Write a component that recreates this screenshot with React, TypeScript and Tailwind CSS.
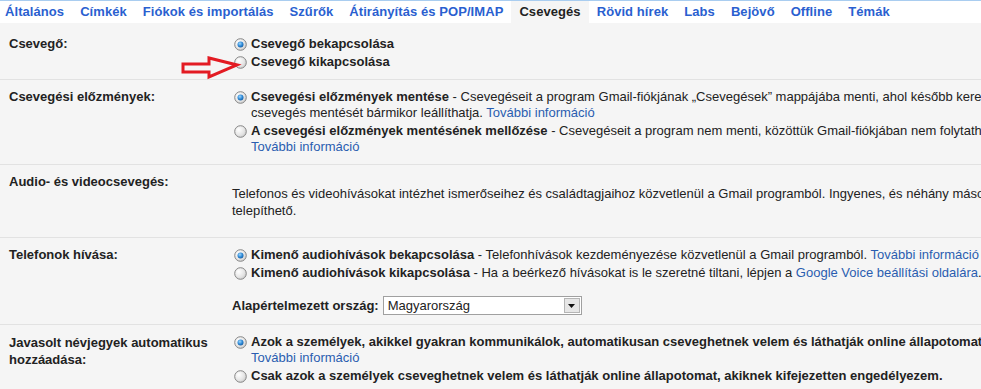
import React from "react";

function Radio({ checked }: { checked?: boolean }) {
  return (
    <svg width="13" height="13" viewBox="0 0 13 13">
      <defs>
        <radialGradient id="rb" cx="0.35" cy="0.35" r="0.8">
          <stop offset="0" stopColor="#ffffff" />
          <stop offset="0.6" stopColor="#e4e4e4" />
          <stop offset="1" stopColor="#c2c2c2" />
        </radialGradient>
        <radialGradient id="rd" cx="0.4" cy="0.35" r="0.8">
          <stop offset="0" stopColor="#9fd6fa" />
          <stop offset="0.5" stopColor="#2e8ad8" />
          <stop offset="1" stopColor="#0d4a8a" />
        </radialGradient>
      </defs>
      <circle cx="6.5" cy="6.5" r="5.8" fill="url(#rb)" stroke="#858585" strokeWidth="1" />
      {checked && <circle cx="6.5" cy="6.5" r="3" fill="url(#rd)" />}
    </svg>
  );
}

function Option({ checked, children, last }: { checked?: boolean; children: React.ReactNode; last?: boolean }) {
  return (
    <div className={`flex ${last ? "" : "mb-[2px]"}`}>
      <div className="w-[18px] shrink-0 pl-[1px] pt-[2px]">
        <Radio checked={checked} />
      </div>
      <div className="leading-[16px]">{children}</div>
    </div>
  );
}

const Link = ({ children }: { children: React.ReactNode }) => (
  <span className="text-[#2a5db0]">{children}</span>
);

const tabs = [
  "Általános",
  "Címkék",
  "Fiókok és importálás",
  "Szűrők",
  "Átirányítás és POP/IMAP",
  "Csevegés",
  "Rövid hírek",
  "Labs",
  "Bejövő",
  "Offline",
  "Témák",
];

export default function App() {
  return (
    <div className="relative w-[981px] h-[389px] overflow-hidden bg-[#f5f5f5] font-['Liberation_Sans',Arial,sans-serif] text-[13px] text-[#222] whitespace-nowrap">
      <div className="h-px bg-[#a9cdf0]" />
      <div className="flex h-[22px] bg-white font-bold ml-[-3px] tracking-[0.07px]">
        {tabs.map((t) => (
          <div
            key={t}
            className={
              t === "Csevegés"
                ? "px-2 flex items-center bg-[#f5f5f5] text-[#222]"
                : "px-2 flex items-center text-[#2a5fd0]"
            }
          >
            {t}
          </div>
        ))}
      </div>

      {/* Row 1 */}
      <div className="flex pt-[13px] pb-[7px] border-b border-[#e2e2e2]">
        <div className="w-[233px] shrink-0 pl-[9px] font-bold leading-[16px]">Csevegő:</div>
        <div>
          <Option checked>
            <b>Csevegő bekapcsolása</b>
          </Option>
          <Option>
            <b>Csevegő kikapcsolása</b>
          </Option>
        </div>
      </div>

      {/* Row 2 */}
      <div className="flex pt-[9px] pb-[7px] border-b border-[#e2e2e2]">
        <div className="w-[233px] shrink-0 pl-[9px] font-bold leading-[16px]">Csevegési előzmények:</div>
        <div>
          <Option checked>
            <b>Csevegési előzmények mentése</b> - Csevegéseit a program Gmail-fiókjának „Csevegések” mappájába menti, ahol később kereshet közöttük. Az egyes
            <br />
            csevegés mentését bármikor leállíthatja. <Link>További információ</Link>
          </Option>
          <Option>
            <b>A csevegési előzmények mentésének mellőzése</b> - Csevegéseit a program nem menti, közöttük Gmail-fiókjában nem folytathat keresést.
            <br />
            <Link>További információ</Link>
          </Option>
        </div>
      </div>

      {/* Row 3 */}
      <div className="flex pt-[9px] pb-[7px] border-b border-[#e2e2e2]">
        <div className="w-[232px] shrink-0 pl-[9px] font-bold leading-[16px]">Audio- és videocsevegés:</div>
        <div className="mt-[11px] mb-[11px] leading-[17px]">
          Telefonos és videohívásokat intézhet ismerőseihez és családtagjaihoz közvetlenül a Gmail programból. Ingyenes, és néhány másodperc alatt
          <br />
          telepíthető.
        </div>
      </div>

      {/* Row 4 */}
      <div className="flex pt-[9px] pb-[7px] border-b border-[#e2e2e2]">
        <div className="w-[233px] shrink-0 pl-[9px] font-bold leading-[16px]">Telefonok hívása:</div>
        <div>
          <Option checked>
            <b>Kimenő audiohívások bekapcsolása</b> - Telefonhívások kezdeményezése közvetlenül a Gmail programból. <Link>További információ</Link>
          </Option>
          <Option>
            <b>Kimenő audiohívások kikapcsolása</b> - Ha a beérkező hívásokat is le szeretné tiltani, lépjen a <Link>Google Voice beállítási oldalára</Link>.
          </Option>
          <div className="flex items-center mt-[15px] mb-[1px] ml-[-1px]">
            <span className="font-bold mr-[4px]">Alapértelmezett ország:</span>
            <div className="flex items-stretch w-[199px] h-[19px] border border-[#a0a0a0] bg-white">
              <div className="flex-1 pl-[4px] flex items-center">Magyarország</div>
              <div className="w-[16px] m-px bg-[#e6e6e6] border border-[#b5b5b5] flex items-center justify-center">
                <svg width="7" height="4" viewBox="0 0 7 4">
                  <path d="M0 0H7L3.5 4Z" fill="#111" />
                </svg>
              </div>
            </div>
          </div>
        </div>
      </div>

      {/* Row 5 */}
      <div className="flex pt-[9px] pb-[7px]">
        <div className="w-[233px] shrink-0 pl-[9px] font-bold leading-[17px]">
          Javasolt névjegyek automatikus
          <br />
          hozzáadása:
        </div>
        <div>
          <Option checked>
            <b>Azok a személyek, akikkel gyakran kommunikálok, automatikusan cseveghetnek velem és láthatják online állapotomat.</b>
            <br />
            <Link>További információ</Link>
          </Option>
          <Option>
            <b>Csak azok a személyek cseveghetnek velem és láthatják online állapotomat, akiknek kifejezetten engedélyezem.</b>
          </Option>
        </div>
      </div>

      {/* red annotation arrow */}
      <svg className="absolute left-[178px] top-[52px]" width="64" height="30" viewBox="0 0 64 30">
        <polygon
          points="5,12 31,12 31,6 59,13 31,25 31,20 5,20"
          fill="none"
          stroke="#e31b23"
          strokeWidth="3"
          strokeLinejoin="miter"
        />
      </svg>
    </div>
  );
}
